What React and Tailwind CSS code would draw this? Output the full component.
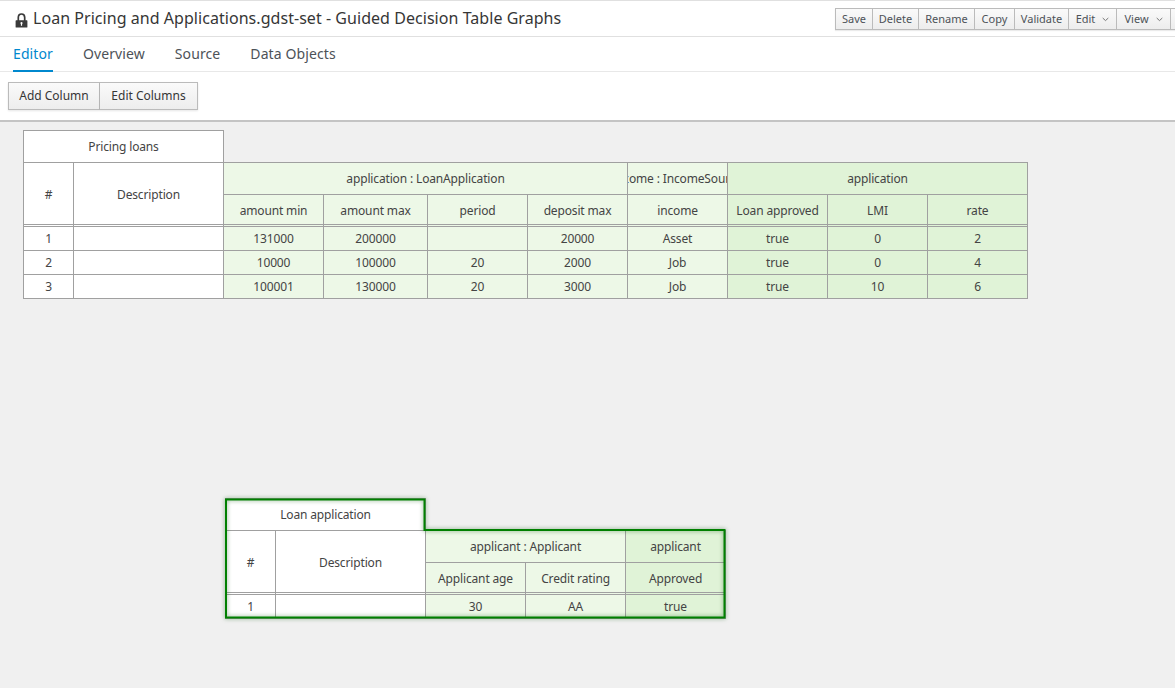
import React from 'react'

const LIGHT = 'bg-[#edf8e7]'
const DARK = 'bg-[#e0f3d7]'
const cellBase = 'border border-[#a0a0a0] p-0 text-center text-[12px] font-normal tracking-[-0.15px] text-[#444]'

function Lock() {
  return (
    <svg width="13" height="15" viewBox="0 0 13 15" className="mt-[6px] ml-px shrink-0">
      <path d="M3.300 8V4.400C3.300 2.400 4.700 1 6.500 1S9.700 2.400 9.700 4.400V8" fill="none" stroke="#3a3a3a" strokeWidth="1.700" />
      <path fillRule="evenodd" d="M1.200 7.300h10.600a.6.6 0 0 1 .6.6v6a.6.6 0 0 1-.6.6H1.200a.6.6 0 0 1-.6-.6v-6a.6.6 0 0 1 .6-.6zM6.500 9a1.100 1.100 0 0 0-.6 2v1.800h1.200V11a1.100 1.100 0 0 0-.6-2z" fill="#3a3a3a" />
    </svg>
  )
}

function Chevron() {
  return (
    <svg width="7" height="5" viewBox="0 0 7 5" className="ml-[7px]">
      <path d="M.7 1l2.800 2.600L6.300 1" fill="none" stroke="#777" strokeWidth="1" />
    </svg>
  )
}

function TopButton({ label, menu, width }) {
  return (
    <div className={`flex h-[20px] items-center justify-center border-r border-[#bbb] text-[11px] text-[#4d5258] ${width}`}>
      {label}
      {menu && <Chevron />}
    </div>
  )
}

function Tab({ label, active }) {
  return (
    <div className={`-mb-px flex h-[35px] items-center border-b-2 text-[14px] tracking-[0.1px] ${active ? 'border-[#0088ce] text-[#0088ce]' : 'border-transparent text-[#4d5258]'}`}>
      {label}
    </div>
  )
}

function Th({ children, tone, colSpan, rowSpan, clip, low }) {
  return (
    <td colSpan={colSpan} rowSpan={rowSpan} className={`${cellBase} ${tone || 'bg-white'} ${low ? 'pt-[2px]' : ''}`}>
      {clip ? <div className="flex justify-center overflow-hidden whitespace-nowrap">{children}</div> : children}
    </td>
  )
}

function toneOf(t) {
  return t === 'w' ? 'bg-white' : t === 'l' ? LIGHT : DARK
}

function GapRow({ tones }) {
  return (
    <tr className="h-[2px]">
      {tones.map((t, i) => (
        <td key={i} className={`border-x border-[#a0a0a0] p-0 text-[0px] leading-[0] ${toneOf(t)}`} />
      ))}
    </tr>
  )
}

function DecisionTable({ caption, widths, groups, columns, rows, tones }) {
  const total = widths.reduce((a, b) => a + b, 0)
  return (
    <table className="table-fixed border-collapse font-['Open_Sans',sans-serif]" style={{ width: total + 1 }}>
      <colgroup>
        {widths.map((w, i) => <col key={i} style={{ width: w }} />)}
      </colgroup>
      <tbody>
        <tr className="h-[32px]">
          <Th colSpan={2}>{caption}</Th>
          <td colSpan={widths.length - 2} />
        </tr>
        <tr className="h-[32px]">
          <Th rowSpan={2} low>#</Th>
          <Th rowSpan={2} low>Description</Th>
          {groups.map((g) => <Th key={g.label} colSpan={g.span} tone={g.tone} clip={g.clip}>{g.label}</Th>)}
        </tr>
        <tr className="h-[30px]">
          {columns.map((c, i) => <Th key={c} tone={toneOf(tones[i + 2])} low>{c}</Th>)}
        </tr>
        <GapRow tones={tones} />
        {rows.map((row, r) => (
          <tr key={r} className="h-[24px]">
            {row.map((v, i) => <Th key={i} tone={toneOf(tones[i])}>{v}</Th>)}
          </tr>
        ))}
      </tbody>
    </table>
  )
}

export default function App() {
  return (
    <div className="flex h-[688px] w-[1175px] flex-col overflow-hidden bg-[#f0f0f0] font-['Open_Sans',sans-serif]">
      {/* Title bar */}
      <div className="flex h-[37px] shrink-0 items-center justify-between border-y border-[#e0e0e0] bg-white pl-[14px]">
        <div className="-mt-[2px] flex items-center gap-[5px] text-[16px] tracking-[0.045px] text-[#363636]">
          <Lock />
          <span>Loan Pricing and Applications.gdst-set - Guided Decision Table Graphs</span>
        </div>
        <div className="mt-px flex border border-r-0 border-[#bbb] bg-gradient-to-b from-[#fafafa] to-[#ededed] shadow-[0_1px_1px_rgba(0,0,0,0.08)]">
          <TopButton label="Save" width="w-[37px]" />
          <TopButton label="Delete" width="w-[46px]" />
          <TopButton label="Rename" width="w-[56px]" />
          <TopButton label="Copy" width="w-[40px]" />
          <TopButton label="Validate" width="w-[54px]" />
          <TopButton label="Edit" menu width="w-[48px]" />
          <TopButton label="View" menu width="w-[54px]" />
          <div className="w-[4px]" />
        </div>
      </div>

      {/* Tabs */}
      <div className="flex h-[35px] shrink-0 gap-[30px] border-b border-[#e8e8e8] bg-white pl-[13px]">
        <Tab label="Editor" active />
        <Tab label="Overview" />
        <Tab label="Source" />
        <Tab label="Data Objects" />
      </div>

      {/* Toolbar */}
      <div className="flex h-[50px] shrink-0 items-start border-b-2 border-[#c4c4c4] bg-white pt-[10px] pl-[8px]">
        <button className="h-[28px] w-[92px] border border-[#bbb] bg-gradient-to-b from-[#fafafa] to-[#ededed] text-[12px] text-[#363636] shadow-[0_1px_2px_rgba(0,0,0,0.1)]">Add Column</button>
        <button className="h-[28px] w-[98px] border border-l-0 border-[#bbb] bg-gradient-to-b from-[#fafafa] to-[#ededed] text-[12px] text-[#363636] shadow-[0_1px_2px_rgba(0,0,0,0.1)]">Edit Columns</button>
      </div>

      {/* Canvas */}
      <div className="relative flex-1">
        <div className="absolute top-[8px] left-[23px]">
          <DecisionTable
            caption="Pricing loans"
            widths={[50, 150, 100, 104, 100, 100, 100, 100, 100, 100]}
            tones={['w', 'w', 'l', 'l', 'l', 'l', 'l', 'd', 'd', 'd']}
            groups={[
              { label: 'application : LoanApplication', span: 4, tone: LIGHT },
              { label: 'income : IncomeSource', span: 1, tone: LIGHT, clip: true },
              { label: 'application', span: 3, tone: DARK },
            ]}
            columns={['amount min', 'amount max', 'period', 'deposit max', 'income', 'Loan approved', 'LMI', 'rate']}
            rows={[
              ['1', '', '131000', '200000', '', '20000', 'Asset', 'true', '0', '2'],
              ['2', '', '10000', '100000', '20', '2000', 'Job', 'true', '0', '4'],
              ['3', '', '100001', '130000', '20', '3000', 'Job', 'true', '10', '6'],
            ]}
          />
        </div>

        <div className="absolute top-[376px] left-[225px]">
          <DecisionTable
            caption="Loan application"
            widths={[50, 150, 100, 100, 100]}
            tones={['w', 'w', 'l', 'l', 'd']}
            groups={[
              { label: 'applicant : Applicant', span: 2, tone: LIGHT },
              { label: 'applicant', span: 1, tone: DARK },
            ]}
            columns={['Applicant age', 'Credit rating', 'Approved']}
            rows={[['1', '', '30', 'AA', 'true']]}
          />
          {/* selection outline */}
          <svg width="510" height="130" viewBox="0 0 510 130" className="pointer-events-none absolute -top-[1px] -left-[1px] drop-shadow-[0_0_2px_rgba(0,80,0,0.55)]">
            <path d="M2 2.500H200.500V33H500.500V120.500H2Z" fill="none" stroke="#008000" strokeWidth="2" />
          </svg>
        </div>
      </div>
    </div>
  )
}
